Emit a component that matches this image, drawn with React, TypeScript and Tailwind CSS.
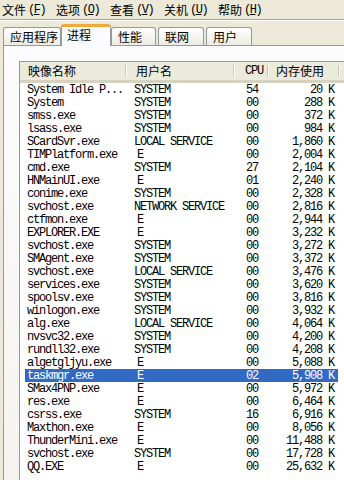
import React from "react";

const CJK = "font-['Noto_Sans_CJK_SC','Noto_Sans',sans-serif]";
const MONO = "font-['Liberation_Mono','DejaVu_Sans_Mono',monospace]";

type Proc = [string, string, string, string];

const PROCS: Proc[] = [
  ["System Idle P...", "SYSTEM", "54", "20 K"],
  ["System", "SYSTEM", "00", "288 K"],
  ["smss.exe", "SYSTEM", "00", "372 K"],
  ["lsass.exe", "SYSTEM", "00", "984 K"],
  ["SCardSvr.exe", "LOCAL SERVICE", "00", "1,860 K"],
  ["TIMPlatform.exe", "E", "00", "2,004 K"],
  ["cmd.exe", "SYSTEM", "27", "2,104 K"],
  ["HNMainUI.exe", "E", "01", "2,240 K"],
  ["conime.exe", "SYSTEM", "00", "2,328 K"],
  ["svchost.exe", "NETWORK SERVICE", "00", "2,816 K"],
  ["ctfmon.exe", "E", "00", "2,944 K"],
  ["EXPLORER.EXE", "E", "00", "3,232 K"],
  ["svchost.exe", "SYSTEM", "00", "3,272 K"],
  ["SMAgent.exe", "SYSTEM", "00", "3,372 K"],
  ["svchost.exe", "LOCAL SERVICE", "00", "3,476 K"],
  ["services.exe", "SYSTEM", "00", "3,620 K"],
  ["spoolsv.exe", "SYSTEM", "00", "3,816 K"],
  ["winlogon.exe", "SYSTEM", "00", "3,932 K"],
  ["alg.exe", "LOCAL SERVICE", "00", "4,064 K"],
  ["nvsvc32.exe", "SYSTEM", "00", "4,200 K"],
  ["rundll32.exe", "SYSTEM", "00", "4,208 K"],
  ["algetgljyu.exe", "E", "00", "5,088 K"],
  ["taskmgr.exe", "E", "02", "5,908 K"],
  ["SMax4PNP.exe", "E", "00", "5,972 K"],
  ["res.exe", "E", "00", "6,464 K"],
  ["csrss.exe", "SYSTEM", "16", "6,916 K"],
  ["Maxthon.exe", "E", "00", "8,056 K"],
  ["ThunderMini.exe", "E", "00", "11,488 K"],
  ["svchost.exe", "SYSTEM", "00", "17,728 K"],
  ["QQ.EXE", "E", "00", "25,632 K"],
];

const MENUS: [string, string][] = [
  ["文件", "F"],
  ["选项", "O"],
  ["查看", "V"],
  ["关机", "U"],
  ["帮助", "H"],
];

const TABS = ["应用程序", "进程", "性能", "联网", "用户"];
const TAB_W = ["w-[58px]", "w-[50px]", "w-[45px]", "w-[46px]", "w-[46px]"];

function HeaderCell({ label, className }: { label: string; className: string }) {
  return (
    <div className={`relative h-full flex items-center shrink-0 ${className}`}>
      {label}
      <div className="absolute right-0 top-[3px] bottom-[4px] w-[2px] border-l border-[#c7c5b2] border-r border-r-white" />
    </div>
  );
}

export default function App() {
  return (
    <div className={`w-[344px] h-[480px] bg-[#ece9d8] overflow-hidden text-[12px] text-black ${CJK}`}>
      {/* menu bar */}
      <div className="h-[19px] flex items-center pl-[2px] leading-none">
        {MENUS.map(([name, key]) => (
          <div key={key} className="w-[54px] shrink-0 whitespace-nowrap flex items-center">
            {name}
            <span className={`ml-[2px] ${MONO} text-[12px] tracking-[-1.5px]`}>
              (<span className="underline">{key}</span>)
            </span>
          </div>
        ))}
      </div>
      <div className="h-[2px] border-t border-[#aca899] border-b border-b-white" />

      {/* tabs */}
      <div className="flex items-end pl-[3px] pt-[2px] h-[24px] gap-[2px] relative z-10">
        {TABS.map((t, i) =>
          i === 1 ? (
            <div
              key={t}
              className={`${TAB_W[i]} -mx-[2px] h-[22px] -mb-px rounded-t-[3px] border-x border-[#919b9c] border-t-[3px] border-t-[#f0a93a] bg-[#fcfcfe] flex items-start pl-[5px] pt-[1px] leading-[14px]`}
            >
              {t}
            </div>
          ) : (
            <div
              key={t}
              className={`${TAB_W[i]} h-[18px] rounded-t-[3px] border border-b-0 border-[#919b9c] bg-gradient-to-b from-white to-[#ecebe5] flex items-center pl-[6px] leading-none`}
            >
              {t}
            </div>
          )
        )}
      </div>

      {/* tab panel */}
      <div className="ml-[3px] w-[370px] h-[440px] border border-[#919b9c] bg-gradient-to-b from-[#fcfcfe] to-[#f4f3ee] pl-[15px] pt-[15px]">
        <div className="w-[360px] h-[430px] border border-[#7f9db9] bg-white">
          {/* header */}
          <div className="h-[21px] flex bg-[#ebeadb] border-b-[3px] border-[#d6d2c2] leading-none">
            <HeaderCell label="映像名称" className="w-[107px] pl-[8px]" />
            <HeaderCell label="用户名" className="w-[108px] pl-[9px]" />
            <HeaderCell label="CPU" className={`w-[34px] pl-[10px] ${MONO} text-[12px] tracking-[-1.2px]`} />
            <HeaderCell label="内存使用" className="w-[71px] pl-[7px]" />
          </div>
          {/* rows */}
          <div className={`${MONO} text-[12px] tracking-[-1.2px]`}>
            {PROCS.map(([name, user, cpu, mem], i) => {
              const sel = name === "taskmgr.exe";
              return (
                <div
                  key={i}
                  className={`ml-[5px] w-[313px] h-[13px] flex items-center leading-none whitespace-pre ${
                    sel ? "bg-[#316ac5] text-white" : ""
                  }`}
                >
                  <div className="w-[102px] pl-[2px] shrink-0">{name}</div>
                  <div className={`w-[108px] shrink-0 ${user === "E" ? "pl-[10px]" : "pl-[7px]"}`}>{user}</div>
                  <div className="w-[34px] pl-[11px] shrink-0">{cpu}</div>
                  <div className="w-[69px] pr-[4px] text-right shrink-0">{mem}</div>
                </div>
              );
            })}
          </div>
        </div>
      </div>
    </div>
  );
}
